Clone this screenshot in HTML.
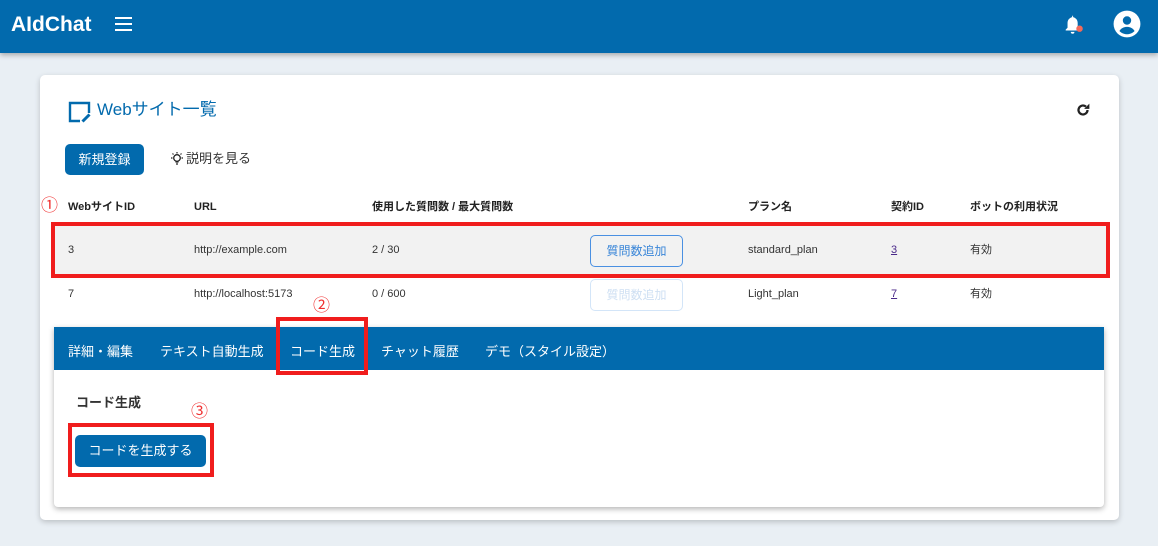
<!DOCTYPE html>
<html><head><meta charset="utf-8"><style>
*{box-sizing:border-box;margin:0;padding:0}
body{width:1158px;height:546px;overflow:hidden;background:#e9eff4;font-family:"Liberation Sans","Noto Sans CJK JP",sans-serif;position:relative;color:#222}
.hdr{position:absolute;left:0;top:0;width:1158px;height:53px;background:#026aad;box-shadow:0 2px 5px rgba(0,0,0,.3)}
.abs{position:absolute}
.card{position:absolute;left:40px;top:75px;width:1079px;height:445px;background:#fff;border-radius:5px;box-shadow:0 2px 6px rgba(0,0,0,.2)}
.th{position:absolute;top:201px;font-size:11px;font-weight:bold;color:#222;line-height:13px}
.td{position:absolute;font-size:11px;color:#333;line-height:13px}
.red{position:absolute;border:4px solid #f01d1d}
.qb{position:absolute;left:590px;width:93px;height:32px;border:1px solid #4a90e2;border-radius:5px;font-size:12px;color:#3a86d8;text-align:center;line-height:30px}
.panel{position:absolute;left:54px;top:327px;width:1050px;height:180px;background:#fff;box-shadow:0 2px 6px rgba(0,0,0,.3);border-radius:0 0 4px 4px}
.tabs{height:43px;background:#026aad;color:#fff;font-size:13px;position:relative}
.tabs span{position:absolute;top:14px}
.circ{position:absolute;color:#f03030;font-size:17px;line-height:17px}
</style></head><body>
<div class="hdr">
<div class="abs" style="left:11px;top:14px;color:#fff;font-size:21px;font-weight:bold;line-height:22px">AIdChat</div>
<div class="abs" style="left:115px;top:17px;width:17px;height:2px;background:#fff;box-shadow:0 6px 0 #fff,0 12px 0 #fff"></div>
<svg class="abs" style="left:1062px;top:13px" width="24" height="24" viewBox="0 0 26 26"><path d="M11 3v1.5C7.5 5.5 6 8 6 11v5l-2 2v1h15v-1l-2-2v-5c0-3-1.5-5.5-5-6.5V3z" fill="#fff"/><path d="M9.5 20.5a2 2 0 004 0z" fill="#fff"/><circle cx="19" cy="17" r="3.5" fill="#f26a5a"/></svg>
<svg class="abs" style="left:1113px;top:10px" width="28" height="28" viewBox="0 0 24 24"><circle cx="12" cy="12" r="11.5" fill="#fff"/><circle cx="12" cy="9" r="3.6" fill="#026aad"/><path d="M5.5 18c1.5-2.5 4-3.5 6.5-3.5s5 1 6.5 3.5c-1.7 1.8-4 2.8-6.5 2.8S7.2 19.8 5.5 18z" fill="#026aad"/></svg>
</div>
<div class="card"></div>
<svg class="abs" style="left:68px;top:101px" width="24" height="22" viewBox="0 0 24 22"><path d="M12 20H2V2h19v10" fill="none" stroke="#026aad" stroke-width="2.4"/><path d="M14.5 20.5l7-7" stroke="#026aad" stroke-width="3"/></svg>
<div class="abs" style="left:97px;top:100px;font-size:17px;color:#026aad;line-height:20px">Webサイト一覧</div>
<svg class="abs" style="left:1074px;top:101px" width="18" height="18" viewBox="0 0 24 24"><path d="M18 12a6 6 0 11-2-4.5" fill="none" stroke="#222" stroke-width="3"/><path d="M20.5 3.5v7h-7z" fill="#222"/></svg>
<div class="abs" style="left:65px;top:144px;width:79px;height:31px;background:#026aad;border-radius:5px;color:#fff;font-size:13px;text-align:center;line-height:31px">新規登録</div>
<svg class="abs" style="left:169px;top:151px" width="16" height="16" viewBox="0 0 16 16"><circle cx="8" cy="7" r="3.3" fill="none" stroke="#222" stroke-width="1.3"/><path d="M6.5 11h3M7 13h2M8 1v1.5M2 7h1.5M12.5 7H14M3.5 2.5l1 1M12.5 2.5l-1 1" stroke="#222" stroke-width="1.2"/></svg>
<div class="abs" style="left:186px;top:151px;font-size:13px;color:#333;line-height:16px">説明を見る</div>
<div class="circ" style="left:41px;top:197px">①</div>
<div class="th" style="left:68px">WebサイトID</div>
<div class="th" style="left:194px">URL</div>
<div class="th" style="left:372px">使用した質問数 / 最大質問数</div>
<div class="th" style="left:748px">プラン名</div>
<div class="th" style="left:891px">契約ID</div>
<div class="th" style="left:970px">ボットの利用状況</div>
<div class="abs" style="left:54px;top:226px;width:1052px;height:48px;background:#f2f2f2"></div>
<div class="td" style="left:68px;top:244px">3</div>
<div class="td" style="left:194px;top:244px">http://example.com</div>
<div class="td" style="left:372px;top:244px">2 / 30</div>
<div class="qb" style="top:235px">質問数追加</div>
<div class="td" style="left:748px;top:244px">standard_plan</div>
<div class="td" style="left:891px;top:244px;text-decoration:underline;color:#4b2a8a">3</div>
<div class="td" style="left:970px;top:244px">有効</div>
<div class="td" style="left:68px;top:288px">7</div>
<div class="td" style="left:194px;top:288px">http://localhost:5173</div>
<div class="td" style="left:372px;top:288px">0 / 600</div>
<div class="qb" style="top:279px;border-color:#d3e5f8;color:#cfe0f3">質問数追加</div>
<div class="td" style="left:748px;top:288px">Light_plan</div>
<div class="td" style="left:891px;top:288px;text-decoration:underline;color:#4b2a8a">7</div>
<div class="td" style="left:970px;top:288px">有効</div>
<div class="red" style="left:51px;top:222px;width:1059px;height:56px"></div>
<div class="circ" style="left:313px;top:297px">②</div>
<div class="panel">
<div class="tabs"><span style="left:14px">詳細・編集</span><span style="left:106px">テキスト自動生成</span><span style="left:236px">コード生成</span><span style="left:327px">チャット履歴</span><span style="left:431px">デモ（スタイル設定）</span></div>
<div class="abs" style="left:22px;top:65px;font-size:13px;font-weight:bold;color:#333">コード生成</div>
<div class="abs" style="left:21px;top:108px;width:131px;height:32px;background:#026aad;border-radius:5px;color:#fff;font-size:13px;text-align:center;line-height:32px">コードを生成する</div>
</div>
<div class="red" style="left:276px;top:317px;width:92px;height:58px"></div>
<div class="circ" style="left:191px;top:403px">③</div>
<div class="red" style="left:68px;top:423px;width:146px;height:54px"></div>
</body></html>
